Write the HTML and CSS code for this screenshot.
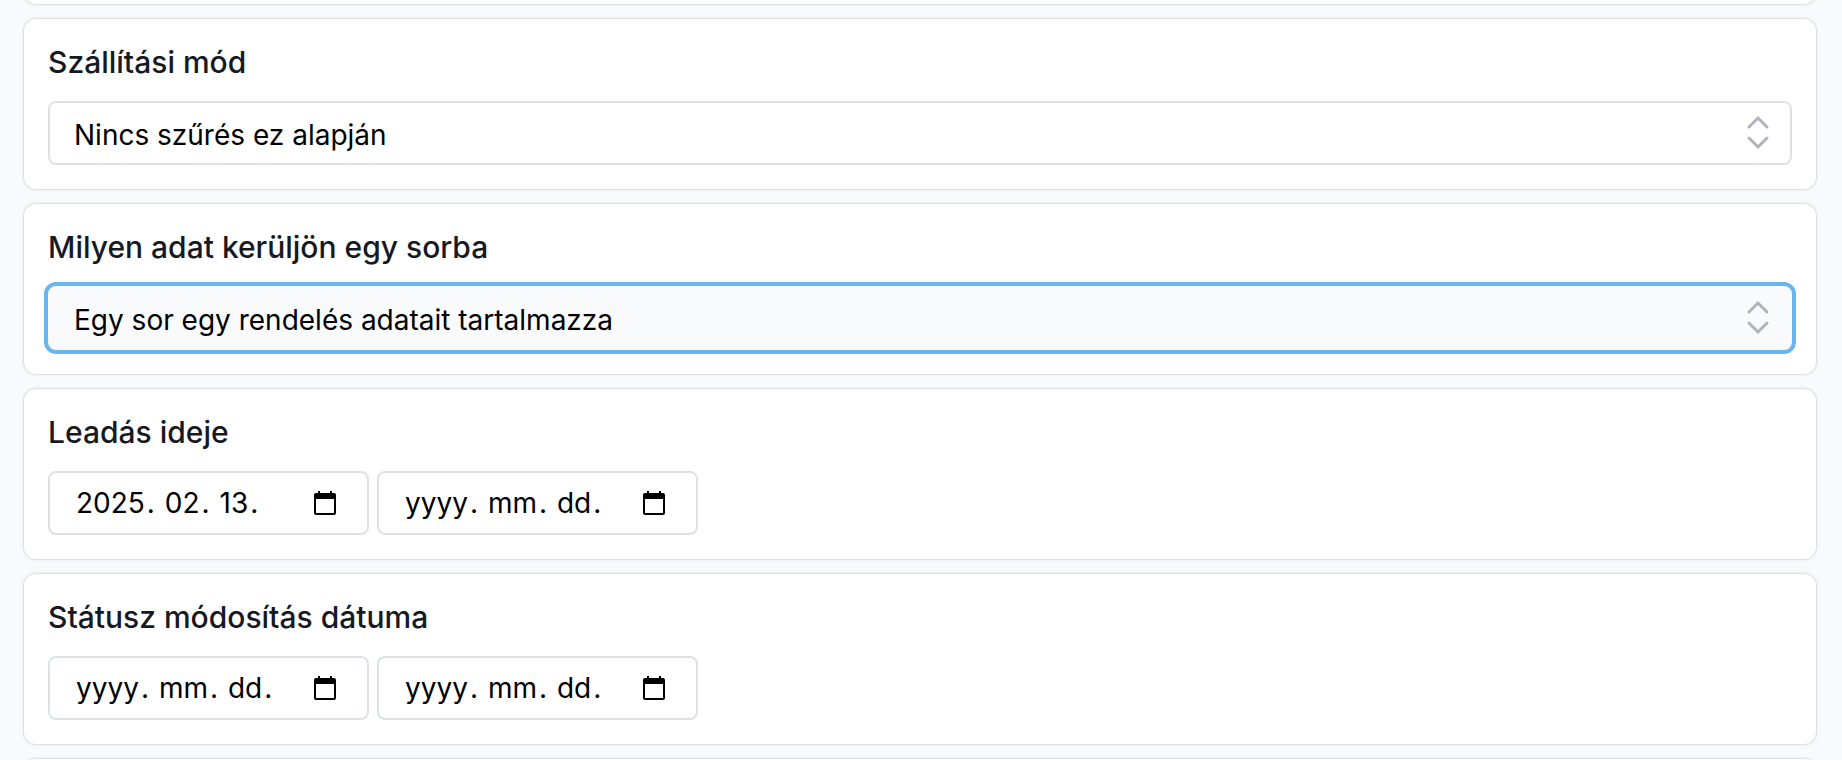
FILE: index.html
```
<!DOCTYPE html>
<html lang="hu">
<head>
    <meta charset="UTF-8">
    <meta name="viewport" content="width=device-width, initial-scale=1.0">
    <title>Rendelések exportálása</title>
    <link rel="stylesheet" href="styles.css">
</head>
<body>

<form class="filters">
    <div class="card card-empty"></div>

    <div class="card">
        <label class="title" for="shipping">Szállítási mód</label>
        <div class="select-box">
            <select id="shipping" name="shipping">
                <option>Nincs szűrés ez alapján</option>
            </select>
            <svg class="arrows" viewBox="0 0 24 36" aria-hidden="true"><path d="M3 12l9-9 9 9M3 23l9 9 9-9"/></svg>
        </div>
    </div>

    <div class="card">
        <label class="title" for="row-type">Milyen adat kerüljön egy sorba</label>
        <div class="select-box">
            <select id="row-type" name="row-type" class="active">
                <option>Egy sor egy rendelés adatait tartalmazza</option>
            </select>
            <svg class="arrows" viewBox="0 0 24 36" aria-hidden="true"><path d="M3 12l9-9 9 9M3 23l9 9 9-9"/></svg>
        </div>
    </div>

    <div class="card">
        <label class="title" for="order-from">Leadás ideje</label>
        <div class="dates">
            <div class="date-box" role="group" aria-label="Leadás ideje kezdete">
                <div class="date-parts">
                    <input type="text" id="order-from" aria-label="Év" value="2025" placeholder="yyyy"><span>. </span>
                    <input type="text" aria-label="Hónap" value="02" placeholder="mm"><span>. </span>
                    <input type="text" aria-label="Nap" value="13" placeholder="dd"><span>.</span>
                </div>
                <button type="button" aria-label="Naptár">
                    <svg viewBox="0 0 22 24"><path fill-rule="evenodd" d="M4 0h2v2h10V0h2v2h2a2 2 0 0 1 2 2v18a2 2 0 0 1-2 2H2a2 2 0 0 1-2-2V4a2 2 0 0 1 2-2h2zM2 8v14h18V8z"/></svg>
                </button>
            </div>
            <div class="date-box" role="group" aria-label="Leadás ideje vége">
                <div class="date-parts">
                    <input type="text" aria-label="Év" placeholder="yyyy"><span>. </span>
                    <input type="text" aria-label="Hónap" placeholder="mm"><span>. </span>
                    <input type="text" aria-label="Nap" placeholder="dd"><span>.</span>
                </div>
                <button type="button" aria-label="Naptár">
                    <svg viewBox="0 0 22 24"><path fill-rule="evenodd" d="M4 0h2v2h10V0h2v2h2a2 2 0 0 1 2 2v18a2 2 0 0 1-2 2H2a2 2 0 0 1-2-2V4a2 2 0 0 1 2-2h2zM2 8v14h18V8z"/></svg>
                </button>
            </div>
        </div>
    </div>

    <div class="card">
        <label class="title" for="status-from">Státusz módosítás dátuma</label>
        <div class="dates">
            <div class="date-box" role="group" aria-label="Státusz módosítás kezdete">
                <div class="date-parts">
                    <input type="text" id="status-from" aria-label="Év" placeholder="yyyy"><span>. </span>
                    <input type="text" aria-label="Hónap" placeholder="mm"><span>. </span>
                    <input type="text" aria-label="Nap" placeholder="dd"><span>.</span>
                </div>
                <button type="button" aria-label="Naptár">
                    <svg viewBox="0 0 22 24"><path fill-rule="evenodd" d="M4 0h2v2h10V0h2v2h2a2 2 0 0 1 2 2v18a2 2 0 0 1-2 2H2a2 2 0 0 1-2-2V4a2 2 0 0 1 2-2h2zM2 8v14h18V8z"/></svg>
                </button>
            </div>
            <div class="date-box" role="group" aria-label="Státusz módosítás vége">
                <div class="date-parts">
                    <input type="text" aria-label="Év" placeholder="yyyy"><span>. </span>
                    <input type="text" aria-label="Hónap" placeholder="mm"><span>. </span>
                    <input type="text" aria-label="Nap" placeholder="dd"><span>.</span>
                </div>
                <button type="button" aria-label="Naptár">
                    <svg viewBox="0 0 22 24"><path fill-rule="evenodd" d="M4 0h2v2h10V0h2v2h2a2 2 0 0 1 2 2v18a2 2 0 0 1-2 2H2a2 2 0 0 1-2-2V4a2 2 0 0 1 2-2h2zM2 8v14h18V8z"/></svg>
                </button>
            </div>
        </div>
    </div>

    <div class="card card-empty"></div>
</form>

</body>
</html>
```
FILE: styles.css
```
* {
    box-sizing: border-box;
}

body {
    margin: 0;
    height: 100vh;
    overflow: hidden;
    font-family: Inter, "Liberation Sans", sans-serif;
    background-color: #f9fafc;
}

.filters {
    display: flex;
    flex-direction: column;
    gap: 15px;
    margin-top: -20px;
    padding: 0 26px 0 24px;
}

.card {
    padding: 24px;
    border-radius: 12px;
    background-color: #fff;
    box-shadow: 0 0 0 1px rgba(0, 0, 0, 0.06), 0 0 4px rgba(0, 0, 0, 0.12);
}

.card-empty {
    height: 24px;
    padding: 0;
}

.title {
    display: block;
    margin-bottom: 20px;
    font-size: 30px;
    font-weight: 500;
    line-height: 38px;
    color: #16191f;
}

.select-box {
    position: relative;
}

select {
    display: block;
    appearance: none;
    width: 100%;
    height: 64px;
    padding: 4px 64px 0 24px;
    border: 2px solid #dee2e8;
    border-radius: 8px;
    outline: none;
    background-color: #fff;
    color: #000;
    font-family: inherit;
    font-size: 28px;
}

select.active {
    border-color: #f9fafc;
    background-color: #f9fafc;
    box-shadow: 0 0 0 4px #68b5f0;
}

.arrows {
    position: absolute;
    top: 14px;
    right: 22px;
    width: 24px;
    height: 36px;
    fill: none;
    stroke: #b0b3bb;
    stroke-width: 3;
    stroke-linecap: round;
    pointer-events: none;
}

.dates {
    display: flex;
    gap: 8px;
}

.date-box {
    display: flex;
    align-items: center;
    justify-content: space-between;
    width: 321px;
    height: 64px;
    padding: 0 31px 0 24px;
    border: 2px solid #dee2e8;
    border-radius: 8px;
    background-color: #fff;
}

.date-parts {
    display: flex;
    font-size: 28px;
    line-height: 34px;
    white-space: pre;
}

.date-parts input {
    field-sizing: content;
    height: 34px;
    padding: 0 2px;
    border: none;
    outline: none;
    background: none;
    color: #000;
    font: inherit;
}

.date-parts input::placeholder {
    color: #000;
    opacity: 1;
}

.date-box button {
    width: 22px;
    height: 24px;
    padding: 0;
    border: none;
    background: none;
    cursor: pointer;
}

.date-box svg {
    display: block;
    width: 22px;
    height: 24px;
}
```
